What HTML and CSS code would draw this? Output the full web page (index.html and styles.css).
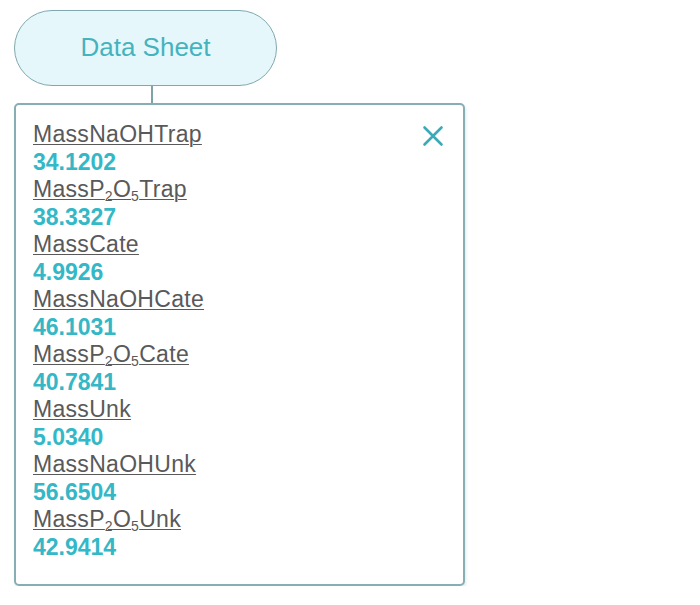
FILE: index.html
```html
<!DOCTYPE html>
<html>
<head>
<meta charset="utf-8">
<link rel="stylesheet" href="styles.css">
</head>
<body>
<div class="page">
  <div class="pill">Data Sheet</div>
  <div class="connector"></div>
  <div class="sheet">
    <button class="close" aria-label="Close">
      <svg width="22" height="22" viewBox="0 0 22 22"><path d="M2.5 2.5 L19.5 19.5 M19.5 2.5 L2.5 19.5" stroke="#3aaab8" stroke-width="2.6" stroke-linecap="round" fill="none"/></svg>
    </button>
    <div class="label">MassNaOHTrap</div>
    <div class="value">34.1202</div>
    <div class="label">MassP<sub>2</sub>O<sub>5</sub>Trap</div>
    <div class="value">38.3327</div>
    <div class="label">MassCate</div>
    <div class="value">4.9926</div>
    <div class="label">MassNaOHCate</div>
    <div class="value">46.1031</div>
    <div class="label">MassP<sub>2</sub>O<sub>5</sub>Cate</div>
    <div class="value">40.7841</div>
    <div class="label">MassUnk</div>
    <div class="value">5.0340</div>
    <div class="label">MassNaOHUnk</div>
    <div class="value">56.6504</div>
    <div class="label">MassP<sub>2</sub>O<sub>5</sub>Unk</div>
    <div class="value">42.9414</div>
  </div>
</div>
</body>
</html>
```
FILE: styles.css
```css
html, body {
  margin: 0;
  padding: 0;
  background: #ffffff;
}
.page {
  display: flex;
  flex-direction: column;
  align-items: flex-start;
  padding: 10px 0 0 14px;
  font-family: "Liberation Sans", Arial, sans-serif;
}
.pill {
  box-sizing: border-box;
  width: 263px;
  height: 76px;
  border: 1.5px solid #7fa9ae;
  border-radius: 38px;
  background: #e6f7fb;
  color: #45b3be;
  font-size: 26px;
  display: flex;
  align-items: center;
  justify-content: center;
  padding-bottom: 2px;
}
.connector {
  width: 1.5px;
  height: 17px;
  background: #7fa3a8;
  margin-left: 137px;
}
.sheet {
  position: relative;
  box-sizing: border-box;
  width: 451px;
  height: 483px;
  border: 2px solid #86aeb3;
  border-radius: 5px;
  background: #ffffff;
  padding: 16px 16px 0 17px;
  box-shadow: 1px 2px 3px rgba(120, 170, 180, 0.25);
  font-size: 23px;
  line-height: 27.5px;
}
.close {
  position: absolute;
  top: 20px;
  right: 19px;
  width: 22px;
  height: 22px;
  padding: 0;
  border: 0;
  background: transparent;
  display: flex;
}
.label {
  color: #595959;
  letter-spacing: 0.3px;
  text-decoration: underline;
  text-decoration-thickness: 1px;
  text-underline-offset: 2px;
}
.label sub {
  font-size: 14px;
  line-height: 0;
  vertical-align: -4px;
}
.value {
  color: #34b7c6;
  font-weight: bold;
}
```
